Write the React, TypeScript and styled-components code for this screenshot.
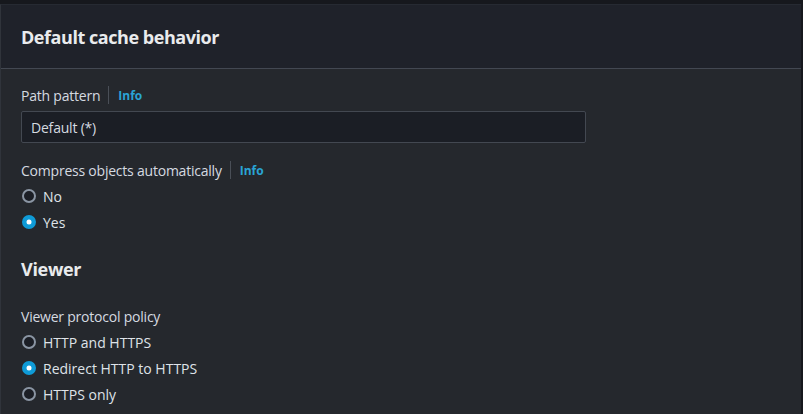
import React from 'react'
import styled, { createGlobalStyle } from 'styled-components'

const GlobalStyle = createGlobalStyle`
  html, body {
    margin: 0;
    padding: 0;
    background: #16181d;
    font-family: "Open Sans", "Noto Sans", sans-serif;
  }
`

type Option = { label: string; checked?: boolean }

function RadioGroup({ options }: { options: Option[] }) {
  return (
    <Radios>
      {options.map((o) => (
        <RadioRow key={o.label}>
          <RadioCircle checked={!!o.checked} />
          <RadioText>{o.label}</RadioText>
        </RadioRow>
      ))}
    </Radios>
  )
}

function FieldLabel({ text, info }: { text: string; info?: boolean }) {
  return (
    <LabelRow>
      <LabelText>{text}</LabelText>
      {info && <InfoLink>Info</InfoLink>}
    </LabelRow>
  )
}

export default function App() {
  return (
    <>
      <GlobalStyle />
      <Page>
        <Panel>
          <Header>
            <Title>Default cache behavior</Title>
          </Header>
          <Body>
            <Field>
              <FieldLabel text="Path pattern" info />
              <Input>Default (*)</Input>
            </Field>
            <Field>
              <FieldLabel text="Compress objects automatically" info />
              <RadioGroup options={[{ label: 'No' }, { label: 'Yes', checked: true }]} />
            </Field>
            <SectionTitle>Viewer</SectionTitle>
            <Field>
              <FieldLabel text="Viewer protocol policy" />
              <RadioGroup
                options={[
                  { label: 'HTTP and HTTPS' },
                  { label: 'Redirect HTTP to HTTPS', checked: true },
                  { label: 'HTTPS only' },
                ]}
              />
            </Field>
          </Body>
        </Panel>
      </Page>
    </>
  )
}

// ~~~~~~~~~~~~~~~~~~~~~~~~~~~~~
// Styles
// ~~~~~~~~~~~~~~~~~~~~~~~~~~~~~
const Page = styled.div`
  width: 803px;
  height: 414px;
  overflow: hidden;
  padding: 4px 2px 0 0;
  box-sizing: border-box;
`

const Panel = styled.div`
  background: #25282d;
  border-left: 1px solid #30343b;
  border-top: 1px solid #262a32;
  height: 100%;
`

const Header = styled.div`
  height: 63px;
  background: #1f222a;
  border-bottom: 1px solid #434852;
  display: flex;
  align-items: center;
  padding: 0 20px;
`

const Title = styled.h2`
  margin: 0;
  font-size: 18px;
  font-weight: 700;
  color: #e9ebed;
  letter-spacing: -0.45px;
`

const Body = styled.div`
  display: flex;
  flex-direction: column;
  padding: 15px 20px 0;
  gap: 16px;
`

const Field = styled.div`
  display: flex;
  flex-direction: column;
  gap: 4px;
`

const LabelRow = styled.div`
  display: flex;
  align-items: center;
  height: 22px;
`

const LabelText = styled.span`
  font-size: 14px;
  color: #d5dae0;
  letter-spacing: -0.22px;
`

const InfoLink = styled.span`
  font-size: 12px;
  font-weight: 700;
  color: #2aa4d5;
  margin-left: 8px;
  padding: 2px 0 0 9px;
  border-left: 1px solid #4a4f57;
  line-height: 16px;
`

const Input = styled.div`
  width: 545px;
  height: 30px;
  margin-top: 1px;
  background: #1b1e25;
  border: 1px solid #434851;
  border-radius: 2px;
  display: flex;
  align-items: center;
  padding: 0 9px;
  font-size: 14px;
  color: #d5dae0;
  letter-spacing: -0.2px;
`

const Radios = styled.div`
  display: flex;
  flex-direction: column;
  gap: 4px;
`

const RadioRow = styled.div`
  display: flex;
  align-items: center;
  height: 22px;
  gap: 7px;
  padding-left: 1px;
`

const RadioCircle = styled.span<{ checked: boolean }>`
  width: 14px;
  height: 14px;
  box-sizing: border-box;
  border-radius: 50%;
  position: relative;
  background: ${({ checked }) => (checked ? '#0f9bd7' : '#1b1e25')};
  border: 2px solid ${({ checked }) => (checked ? '#0f9bd7' : '#8a95a3')};

  &::after {
    content: '';
    display: ${({ checked }) => (checked ? 'block' : 'none')};
    position: absolute;
    left: 50%;
    top: 50%;
    width: 5px;
    height: 5px;
    border-radius: 50%;
    background: #ffffff;
    transform: translate(-50%, -50%);
  }
`

const RadioText = styled.span`
  font-size: 14px;
  color: #dfe3e8;
`

const SectionTitle = styled.h3`
  margin: 6px 0 6px;
  font-size: 18px;
  font-weight: 700;
  color: #e9ebed;
  line-height: 28px;
  letter-spacing: -0.3px;
`
